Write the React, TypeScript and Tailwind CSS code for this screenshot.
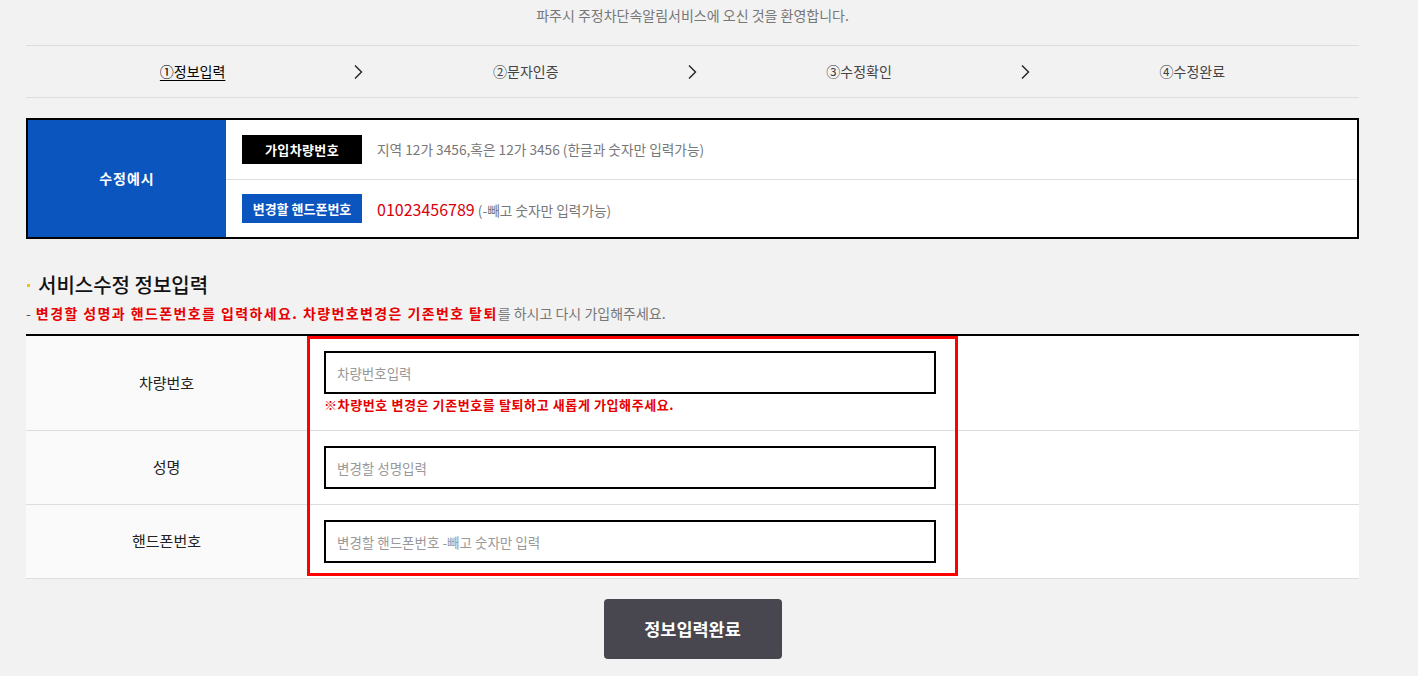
import React from "react";

const steps = ["①정보입력", "②문자인증", "③수정확인", "④수정완료"];

function Chevron() {
  return (
    <svg
      className="absolute right-[-4px] top-1/2 -translate-y-1/2"
      width="9"
      height="15"
      viewBox="0 0 9 15"
      fill="none"
    >
      <polyline points="1,1 7.5,7.5 1,14" stroke="#222" strokeWidth="1.4" />
    </svg>
  );
}

export default function App() {
  const rows = [
    { label: "차량번호", placeholder: "차량번호입력", note: true },
    { label: "성명", placeholder: "변경할 성명입력", note: false },
    { label: "핸드폰번호", placeholder: "변경할 핸드폰번호 -빼고 숫자만 입력", note: false },
  ];

  return (
    <div className="min-h-screen bg-[#f2f2f2] font-['Noto_Sans_CJK_KR',sans-serif] text-[#333]">
      <div className="ml-[26px] w-[1333px] pb-10">
        <p className="pt-[5px] text-center text-[14px] leading-[20px] text-[#777]">
          파주시 주정차단속알림서비스에 오신 것을 환영합니다.
        </p>

        {/* steps */}
        <ul className="mt-[20px] grid h-[53px] grid-cols-4 border-y border-[#ddd]">
          {steps.map((s, i) => (
            <li key={s} className="relative flex items-center justify-center text-[14px]">
              <span className={i === 0 ? "text-black underline underline-offset-[3px]" : "text-[#444]"}>{s}</span>
              {i < 3 && <Chevron />}
            </li>
          ))}
        </ul>

        {/* example box */}
        <div className="mt-[20px] flex border-2 border-black">
          <div className="flex w-[198px] items-center justify-center bg-[#0b55be] text-[14px] font-bold tracking-[1px] text-white">
            수정예시
          </div>
          <div className="flex-1 bg-white">
            <div className="flex h-[59px] items-center gap-[15px] pl-[16px]">
              <span className="flex h-[29px] w-[120px] items-center justify-center bg-black text-[13px] font-bold tracking-[0.4px] text-white">
                가입차량번호
              </span>
              <span className="text-[13.7px] text-[#777]">지역 12가 3456,혹은 12가 3456 (한글과 숫자만 입력가능)</span>
            </div>
            <div className="flex h-[58px] items-center gap-[15px] border-t border-[#ddd] pl-[16px]">
              <span className="flex h-[29px] w-[120px] items-center justify-center bg-[#0b55be] text-[13px] font-bold text-white">
                변경할 핸드폰번호
              </span>
              <span className="text-[13.7px] text-[#777]">
                <span className="text-[16px] text-[#d9000d]">01023456789</span> (-빼고 숫자만 입력가능)
              </span>
            </div>
          </div>
        </div>

        {/* section title */}
        <h2 className="mt-[34px] flex items-center text-[20px] font-medium leading-[24px] text-[#111]">
          <span className="ml-[1px] mr-[8px] h-[3px] w-[3px] bg-[#f5c400]" />
          서비스수정 정보입력
        </h2>
        <p className="mt-[6px] text-[14px] leading-[20px] text-[#777]">
          <span className="mr-[5px] text-[#555]">-</span>
          <span className="font-bold tracking-[1.4px] text-[#e60000]">
            변경할 성명과 핸드폰번호를 입력하세요. 차량번호변경은 기존번호 탈퇴
          </span>
          를 하시고 다시 가입해주세요.
        </p>

        {/* form table */}
        <div className="relative mt-[11px] border-t-2 border-black bg-white">
          {rows.map((r) => (
            <div key={r.label} className="grid grid-cols-[281px_1fr] border-b border-[#ddd]">
              <div className="flex items-center justify-center bg-[#fafafa] text-[15px] text-[#222]">{r.label}</div>
              <div className="px-[17px] py-[15px]">
                <input
                  className="block h-[43px] w-[612px] border-2 border-black bg-white px-[11px] text-[13.5px] text-[#333] outline-none placeholder:text-[#999]"
                  placeholder={r.placeholder}
                />
                {r.note && (
                  <p className="text-[13px] font-bold leading-[21px] tracking-[0.6px] text-[#e60000]">
                    ※차량번호 변경은 기존번호를 탈퇴하고 새롭게 가입해주세요.
                  </p>
                )}
              </div>
            </div>
          ))}
          <div className="pointer-events-none absolute left-[281px] top-0 h-[240px] w-[651px] border-[3px] border-[#ff0000]" />
        </div>

        <button className="mx-auto mt-[20px] block h-[60px] w-[178px] rounded-[4px] bg-[#48474f] text-[17.5px] font-bold text-white">
          정보입력완료
        </button>
      </div>
    </div>
  );
}
